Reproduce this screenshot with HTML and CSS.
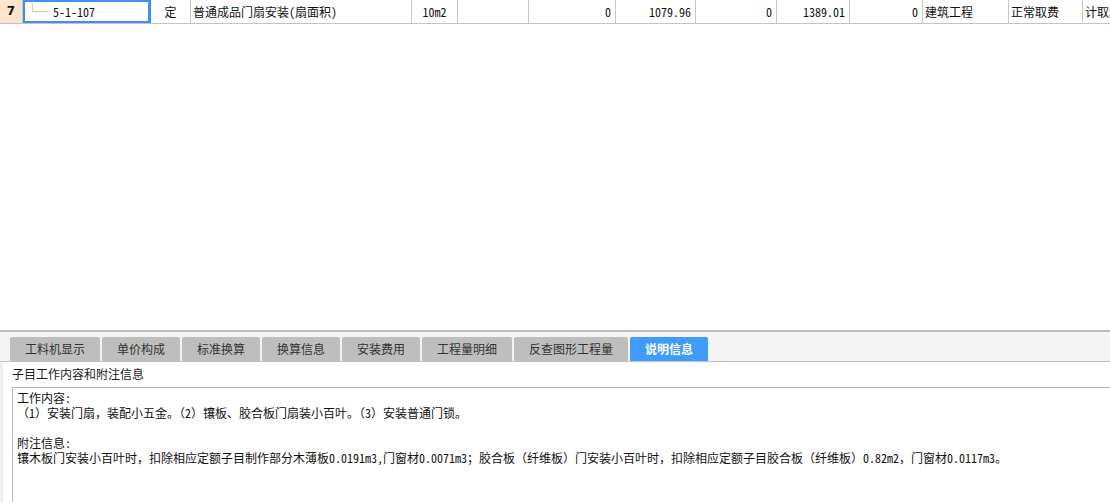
FILE: index.html
```html
<!DOCTYPE html>
<html lang="zh">
<head>
<meta charset="utf-8">
<link rel="stylesheet" href="styles.css">
</head>
<body>
<div class="app">
  <div class="sheet">
    <div class="row">
      <div class="c c-num">7</div>
      <div class="c c-code sel"><span class="tree"></span><span class="code">5-1-107</span></div>
      <div class="c c-type">定</div>
      <div class="c c-name">普通成品门扇安装(扇面积)</div>
      <div class="c c-unit">10m2</div>
      <div class="c c-w5"></div>
      <div class="c c-w6 r">0</div>
      <div class="c c-w7 r">1079.96</div>
      <div class="c c-w8 r">0</div>
      <div class="c c-w9 r">1389.01</div>
      <div class="c c-w10 r">0</div>
      <div class="c c-w11">建筑工程</div>
      <div class="c c-w12">正常取费</div>
      <div class="c c-w13">计取超高费</div>
    </div>
  </div>
  <div class="panel">
    <div class="tabs">
      <div class="tab t90">工料机显示</div>
      <div class="tab t78">单价构成</div>
      <div class="tab t78">标准换算</div>
      <div class="tab t78">换算信息</div>
      <div class="tab t78">安装费用</div>
      <div class="tab t90">工程量明细</div>
      <div class="tab t114">反查图形工程量</div>
      <div class="tab t78 active">说明信息</div>
    </div>
    <div class="body">
      <div class="label">子目工作内容和附注信息</div>
      <div class="textbox">
        <div class="line">工作内容:</div>
        <div class="line">（1）安装门扇，装配小五金。（2）镶板、胶合板门扇装小百叶。（3）安装普通门锁。</div>
        <div class="line">&nbsp;</div>
        <div class="line">附注信息:</div>
        <div class="line">镶木板门安装小百叶时，扣除相应定额子目制作部分木薄板0.0191m3,门窗材0.0071m3；胶合板（纤维板）门安装小百叶时，扣除相应定额子目胶合板（纤维板）0.82m2，门窗材0.0117m3。</div>
      </div>
    </div>
  </div>
</div>
</body>
</html>
```

FILE: styles.css
```css
html, body {
  margin: 0;
  padding: 0;
  background: #ffffff;
}
.app {
  width: 1110px;
  height: 502px;
  display: flex;
  flex-direction: column;
  overflow: hidden;
}
.sheet {
  flex: 0 0 330px;
  background: #ffffff;
  font-family: "Noto Sans Mono CJK SC", "Noto Sans CJK SC", monospace;
  font-size: 12px;
  color: #111;
}
.row {
  display: flex;
  height: 23px;
  border-bottom: 1px solid #c4c4c4;
  white-space: nowrap;
}
.c {
  box-sizing: border-box;
  height: 23px;
  line-height: 23px;
  border-right: 1px solid #c8c8c8;
  padding: 0 2px;
  overflow: hidden;
  flex: none;
}
.r { text-align: right; padding-right: 4px; }
.c-num {
  width: 23px;
  background: #fde4cb;
  font-weight: bold;
  text-align: center;
  padding: 0;
  font-family: "DejaVu Sans", sans-serif;
}
.c-code {
  width: 128px;
  display: flex;
  align-items: flex-start;
  padding: 0;
}
.sel { box-shadow: inset 0 0 0 2px #3f8ff0; border-right-color: #3f8ff0; }
.tree {
  display: block;
  width: 16px;
  height: 8px;
  margin: 3px 0 0 9px;
  border-left: 1px solid #f5c98c;
  border-bottom: 1px solid #f5c98c;
}
.code { margin-left: 4px; }
.c-type { width: 40px; text-align: center; }
.c-name { width: 221px; }
.c-unit { width: 46px; text-align: center; }
.c-w5 { width: 71px; }
.c-w6 { width: 87px; }
.c-w7 { width: 80px; }
.c-w8 { width: 81px; }
.c-w9 { width: 73px; }
.c-w10 { width: 73px; }
.c-w11 { width: 86px; }
.c-w12 { width: 74px; }
.c-w13 { width: 60px; border-right: none; }

.panel {
  flex: 1;
  display: flex;
  flex-direction: column;
  border-top: 2px solid #bcbcbc;
  font-family: "Noto Sans CJK SC", sans-serif;
  font-size: 12px;
}
.tabs {
  height: 29px;
  background: #f3f3f3;
  border-bottom: 1px solid #c2c2c2;
  display: flex;
  align-items: flex-end;
  gap: 2px;
  padding-left: 10px;
}
.tab {
  height: 24px;
  line-height: 24px;
  text-align: center;
  background: #bebebe;
  color: #333;
  border-radius: 2px 2px 0 0;
  font-size: 12px;
}
.t78 { width: 78px; }
.t90 { width: 90px; }
.t114 { width: 114px; }
.tab.active {
  background: #409cfc;
  color: #ffffff;
  font-weight: bold;
}
.body {
  flex: 1;
  display: flex;
  flex-direction: column;
  border-left: 3px solid #efefef;
  background: #ffffff;
}
.label {
  height: 25px;
  line-height: 24px;
  padding-left: 9px;
  color: #1a1a1a;
}
.textbox {
  flex: 1;
  margin-left: 9px;
  border-top: 1px solid #b8b8b8;
  border-left: 1px solid #b8b8b8;
  padding: 2px 4px;
  font-family: "Noto Sans Mono CJK SC", "Noto Sans CJK SC", monospace;
  font-size: 12px;
  color: #111;
}
.line {
  height: 15px;
  line-height: 15px;
  white-space: nowrap;
}
```
